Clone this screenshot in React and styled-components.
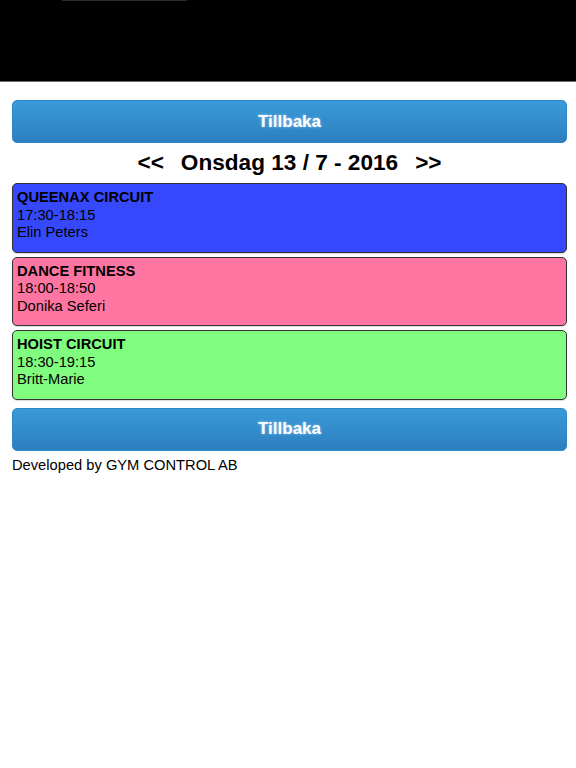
import styled, { createGlobalStyle } from "styled-components";

const GlobalStyle = createGlobalStyle`
  html, body {
    margin: 0;
    padding: 0;
    background: #ffffff;
    font-family: "Liberation Sans", Arial, Helvetica, sans-serif;
    color: #000000;
  }
`;

const TopBar = styled.div`
  height: 81px;
  background-color: #000000;
  border-bottom: 1px solid #6a6a6a;
  position: relative;
  &::before {
    content: "";
    position: absolute;
    top: 0;
    left: 62px;
    width: 125px;
    height: 1px;
    background: #2a2a2a;
  }
`;

const Page = styled.div`
  padding: 18px 9px 0 12px;
  display: flex;
  flex-direction: column;
`;

const BackButton = styled.button`
  height: 43px;
  width: 100%;
  border: 1px solid #2f86c8;
  border-radius: 5px;
  background: linear-gradient(#3a9ad9, #2c7fbf);
  color: #ffffff;
  font-family: "Liberation Sans", Arial, Helvetica, sans-serif;
  font-size: 17px;
  font-weight: bold;
  text-shadow: 0 0 3px rgba(255, 255, 255, 0.55);
  cursor: pointer;
`;

const DateNav = styled.div`
  display: flex;
  justify-content: center;
  align-items: center;
  gap: 17px;
  height: 40px;
  font-size: 22.6px;
  font-weight: bold;
`;

const NavArrow = styled.span`
  cursor: pointer;
`;

const List = styled.div`
  display: flex;
  flex-direction: column;
  gap: 4px;
  margin-bottom: 8px;
`;

const Card = styled.div`
  background-color: ${(p) => p.$color};
  border: 1px solid #333333;
  border-radius: 5px;
  box-shadow: 0 1px 1px rgba(0, 0, 0, 0.15);
  padding: 5px 4px 10px;
  font-size: 14.7px;
  line-height: 17.5px;
`;

const Title = styled.div`
  font-weight: bold;
`;

const Footer = styled.div`
  font-size: 14.7px;
  padding-top: 6px;
`;

const classes = [
  { name: "QUEENAX CIRCUIT", time: "17:30-18:15", leader: "Elin Peters", color: "#3548fc" },
  { name: "DANCE FITNESS", time: "18:00-18:50", leader: "Donika Seferi", color: "#fe75a2" },
  { name: "HOIST CIRCUIT", time: "18:30-19:15", leader: "Britt-Marie", color: "#80fc7f" },
];

export default function App() {
  return (
    <>
      <GlobalStyle />
      <TopBar />
      <Page>
        <BackButton>Tillbaka</BackButton>
        <DateNav>
          <NavArrow>&lt;&lt;</NavArrow>
          <span>Onsdag 13 / 7 - 2016</span>
          <NavArrow>&gt;&gt;</NavArrow>
        </DateNav>
        <List>
          {classes.map((c) => (
            <Card key={c.name} $color={c.color}>
              <Title>{c.name}</Title>
              <div>{c.time}</div>
              <div>{c.leader}</div>
            </Card>
          ))}
        </List>
        <BackButton>Tillbaka</BackButton>
        <Footer>Developed by GYM CONTROL AB</Footer>
      </Page>
    </>
  );
}
